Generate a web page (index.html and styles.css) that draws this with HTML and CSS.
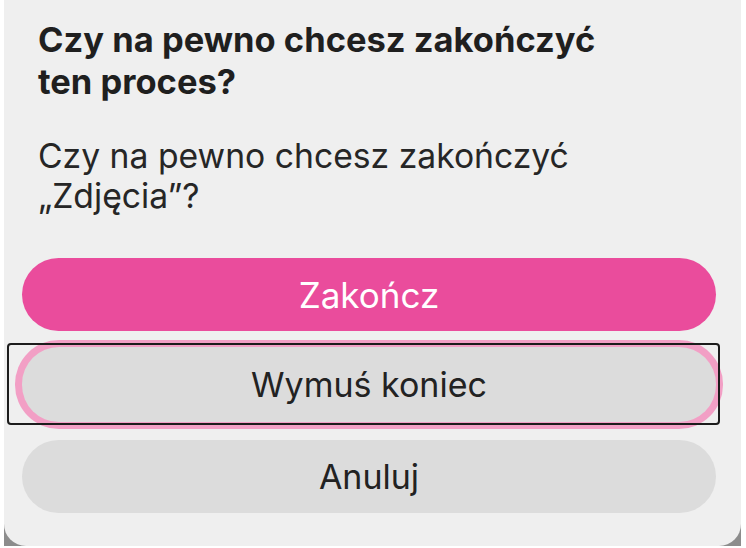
FILE: index.html
```html
<!DOCTYPE html>
<html lang="pl">
<head>
<meta charset="utf-8">
<link rel="stylesheet" href="styles.css">
</head>
<body>
<div class="frame">
  <div class="panel">
    <h1 class="title">Czy na pewno chcesz zakończyć<br>ten proces?</h1>
    <p class="message">Czy na pewno chcesz zakończyć<br>„Zdjęcia”?</p>
    <div class="buttons">
      <button class="btn btn-primary">Zakończ</button>
      <div class="focus-wrap">
        <button class="btn btn-gray btn-focused">Wymuś koniec</button>
        <div class="focus-rect"></div>
      </div>
      <button class="btn btn-gray btn-last">Anuluj</button>
    </div>
  </div>
</div>
</body>
</html>
```

FILE: styles.css
```css
html, body {
  margin: 0;
  padding: 0;
  background: #ffffff;
}
body {
  width: 746px;
  height: 548px;
  overflow: hidden;
  font-family: Inter, Roboto, "Liberation Sans", Arial, sans-serif;
  color: #222222;
}
.frame {
  margin-left: 4px;
  width: 737px;
  height: 546px;
  background: linear-gradient(to bottom, #efefef 0, #efefef 520px, #8c8c8c 520px);
}
.panel {
  height: 546px;
  box-sizing: border-box;
  background: #efefef;
  border-radius: 0 0 22px 22px;
  padding: 19px 18px 0 18px;
  display: flex;
  flex-direction: column;
}
.title {
  margin: 0 0 0 16px;
  font-size: 34.5px;
  font-weight: 700;
  line-height: 42px;
  color: #1f1f1f;
  letter-spacing: 0;
}
.message {
  margin: 33px 0 0 16px;
  font-size: 33.7px;
  font-weight: 400;
  line-height: 40px;
  color: #262626;
}
.buttons {
  margin-top: 42px;
  display: flex;
  flex-direction: column;
  gap: 16px;
}
.btn {
  display: block;
  width: 694px;
  height: 73px;
  border: none;
  border-radius: 37px;
  font-family: Inter, Roboto, "Liberation Sans", Arial, sans-serif;
  font-size: 34px;
  padding: 0;
  cursor: default;
}
.btn-primary {
  background: #ea4c9c;
  color: #ffffff;
  font-size: 35px;
}
.btn-gray {
  background: #dcdcdc;
  color: #222222;
}
.btn-last {
  margin-top: 2px;
}
.focus-wrap {
  position: relative;
}
.btn-focused {
  height: 75px;
  box-shadow: 0 0 0 7px #f29fc5;
}
.focus-rect {
  position: absolute;
  left: -15px;
  top: -4px;
  width: 709px;
  height: 78px;
  border: 2px solid #1c1c1c;
  border-radius: 4px;
  pointer-events: none;
}
```
